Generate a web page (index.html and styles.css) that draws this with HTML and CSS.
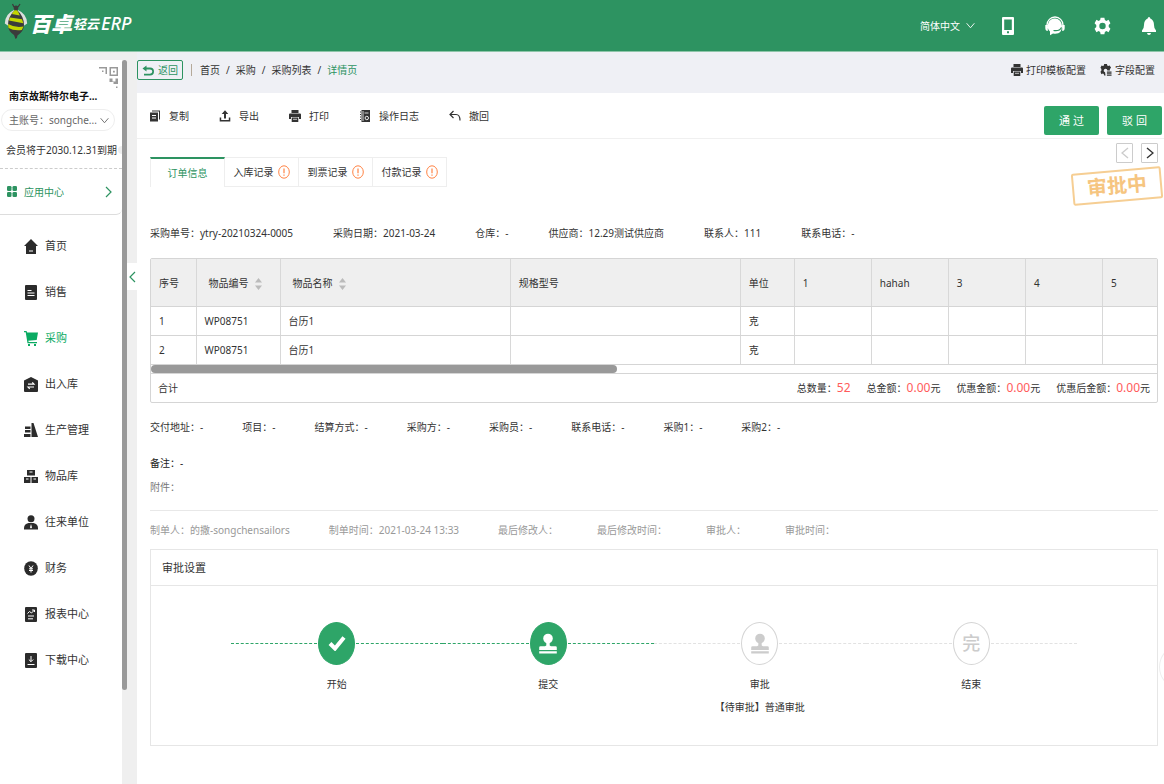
FILE: index.html
```html
<!DOCTYPE html>
<html lang="zh-CN">
<head>
<meta charset="utf-8">
<meta name="viewport" content="width=device-width, initial-scale=1">
<title>百卓轻云ERP</title>
<link rel="stylesheet" href="styles.css">
</head>
<body>
<svg class="defs" aria-hidden="true">
  <symbol id="printer" viewBox="0 0 12 12"><path d="M2.500 0h7v3h-7zM1 3.500h10a1 1 0 0 1 1 1V9h-2V7H2v2H0V4.500a1 1 0 0 1 1-1zM2.700 7.500h6.600V12H2.700z"/><path d="M4 9.300h4" stroke="#fff" stroke-width=".7"/></symbol>
  <symbol id="warn" viewBox="0 0 12 14"><ellipse cx="6" cy="7" rx="5.300" ry="6.200" fill="none" stroke="#ff8344"/><path d="M6 3.500v4.700M6 9.500v1.300" stroke="#ff8344" stroke-width="1.200"/></symbol>
  <symbol id="stamp" viewBox="0 0 18 21"><circle cx="9" cy="5.500" r="4.800"/><path d="M7.300 9h3.400v3.500l1.300.8h4.500q1.300 0 1.300 1.300V17H.2v-2.400q0-1.300 1.300-1.300H6l1.300-.8zM.2 18.300h17.600v2.200H.2z"/></symbol>
  <symbol id="sort" viewBox="0 0 7 12"><path d="M3.500 0 7 4.500H0zM0 7.500h7L3.500 12z"/></symbol>
</svg>

<header class="topbar">
  <a class="logo" href="#">
    <svg class="bee" viewBox="0 0 24 36"><path d="M10 4 8.500 1M14 4l2-3" stroke="#3b3b3b" stroke-width="1.300"/><path d="M10 7Q1 11 .8 20.500L6 24q0-9 5-14zM14 7q9 4 9.200 13.500L18 24q0-9-5-14z" fill="#dcdfdc"/><path d="M12 6q-8 7-8 16 0 6 6 10l1.500 4q2-1 2-3.500Q20 28 20 22q0-9-8-16z" fill="#3b3b3b"/><path d="M12 6q-2.500 2-4.200 5l8 1.500q-1.300-4-3.800-6.500zM6 14.500l12 1.800 1.300 4L5 17.500zM4 21q7 4 15.500 2.500L17.800 27Q10 28 4.500 25z" fill="#c3d600"/><circle cx="12" cy="5" r="2.400" fill="#3b3b3b"/></svg>
    <span class="logo-main">百卓</span><span class="logo-sub">轻云</span><span class="logo-erp">ERP</span>
  </a>
  <nav class="top-tools" aria-label="工具">
    <label class="language"><select aria-label="语言"><option>简体中文</option></select><svg class="caret" viewBox="0 0 10 7"><path d="m.7 1 4.300 5 4.300-5"/></svg></label>
    <button class="plain" aria-label="手机"><svg class="phone" viewBox="0 0 12 18"><path fill="#fff" fill-rule="evenodd" d="M1 0h10q1 0 1 1v16q0 1-1 1H1q-1 0-1-1V1q0-1 1-1zm1.200 2.500v10.500h7.600V2.500zM5 14.300v2h2v-2z"/></svg></button>
    <button class="plain" aria-label="客服"><svg class="large" viewBox="0 0 20 20"><path d="M2 12V9a8 8 0 0 1 16 0v3" fill="none" stroke="#fff" stroke-width="1.300"/><path d="M10 2.500a7 7.500 0 0 0-5 13v3.700l3-1.700q9 1.500 9-7.500a7 7.500 0 0 0-7-7.500zM.3 9h2.500v6Q.3 15 .3 12zM17.200 9h2.500v3q0 3-2.500 3z" fill="#fff"/><path d="M8.500 14.500q6 1 8-3" fill="none" stroke="#2d9361" stroke-width="1.200"/></svg></button>
    <button class="plain" aria-label="设置"><svg class="gear" viewBox="0 0 18 20"><path fill="#fff" fill-rule="evenodd" d="M7 1.200h4l.5 2.500 1.600 1 2.300-1.200 2 3.500-1.800 1.900v2.200l1.800 1.900-2 3.500-2.300-1.200-1.600 1-.5 2.500H7l-.5-2.500-1.600-1-2.300 1.200-2-3.500L2.400 11V8.900L.6 7l2-3.500 2.300 1.200 1.600-1zM9 6.500a3.400 3.500 0 1 0 0 7 3.400 3.500 0 0 0 0-7z"/></svg></button>
    <button class="plain" aria-label="通知"><svg class="bell" viewBox="0 0 14 18"><path fill="#fff" d="M7 0q1.200 0 1.300 1.500Q12 3 12 8q0 4 2 5.500V15H0v-1.500Q2 12 2 8q0-5 3.700-6.500Q5.800 0 7 0zM5 16h4q-.3 2-2 2t-2-2z"/></svg></button>
  </nav>
</header>

<div class="shell">
  <aside class="sidebar">
    <div class="sidebar-body">
      <section class="account">
        <svg class="qr" viewBox="0 0 19 22"><path d="M0 1h8v7H6.500V2.500H0zM10.500 1H19v9h-8.500zM12 2.500v6h5.500v-6zM14 4.700h1.800v1.800H14zM3 4.500h1.500V6H3zM10.500 12.500h3v3h3v-3H19V18h-4.500v-2h-4zM17 20.500h1.500V22H17z" fill="#999" fill-rule="evenodd"/></svg>
        <h1 class="company">南京故斯特尔电子...</h1>
        <label class="account-select"><select aria-label="账号"><option>主账号：songche...</option></select><svg class="caret" viewBox="0 0 10 7"><path d="m.7 1 4.300 5 4.300-5"/></svg></label>
        <p class="expiry">会员将于2030.12.31到期<i class="expiry-dot"></i></p>
        <a class="app-center" href="#"><svg class="grid-icon" viewBox="0 0 10 11"><rect width="4.500" height="5" rx="1.300"/><rect x="5.500" width="4.500" height="5" rx="1.300"/><rect y="6" width="4.500" height="5" rx="1.300"/><rect x="5.500" y="6" width="4.500" height="5" rx="1.300"/></svg><span>应用中心</span><svg class="chevron" viewBox="0 0 7 12"><path d="m1 1 5 5-5 5"/></svg></a>
      </section>
      <nav class="menu" aria-label="主菜单">
        <a href="#"><svg viewBox="0 0 14 15"><path d="m7 0 7 7h-2v8H2V7H0zM5 11.500v1h4v-1z" fill-rule="evenodd"/></svg>首页</a>
        <a href="#"><svg viewBox="0 0 14 15"><path d="M2 0h10q1 0 1 1v13q0 1-1 1H2q-1 0-1-1V1q0-1 1-1z"/><path d="M3.500 5.500h4M3.500 8h7M3.500 10.500h7" stroke="#fff" stroke-width="1.200"/></svg>销售</a>
        <a class="active" href="#"><svg viewBox="0 0 14 15"><path d="M0 0h2.500l.7 1.500H14l-1.300 7.500-8.500.8.500 1.200H13v1.300H3.500L1.700 1.300H0zM4 13h2v2H4zM10 13h2v2h-2z"/></svg>采购</a>
        <a href="#"><svg viewBox="0 0 14 15"><path d="m7 0 7 3.500V14q0 1-1 1H1q-1 0-1-1V3.500z"/><path d="M4 7.200h6L8.300 5.300M10 10H4l1.700 1.900" stroke="#fff" stroke-width="1.200" fill="none"/></svg>出入库</a>
        <a href="#"><svg viewBox="0 0 14 15"><path d="M7.500 0h2L14 14H7.500zM1 3.500h5.500V6H1zM1 7h5.500v2.500H1zM0 11h6.500v3H0z"/></svg>生产管理</a>
        <a href="#"><svg viewBox="0 0 14 15"><path d="M3 1h8v5.500H3zM0 8h6.500v6H0zM7.500 8H14v6H7.500z"/><path d="M5.500 3h3M2 10h2.500M9.500 10H12" stroke="#fff"/></svg>物品库</a>
        <a href="#"><svg viewBox="0 0 14 15"><circle cx="7" cy="3.800" r="3.500"/><path d="M4.500 8h5Q14 9 14 13v1.500H0V13Q0 9 4.500 8z"/><path d="m7 9-1 3.500 1 1 1-1z" fill="#fff"/></svg>往来单位</a>
        <a href="#"><svg viewBox="0 0 14 15"><ellipse cx="7" cy="7.500" rx="6.800" ry="7.300"/><path d="m5 4.500 2 3 2-3M5 7.800h4M5 9.500h4M7 7.500V11.500" stroke="#fff" fill="none"/></svg>财务</a>
        <a href="#"><svg viewBox="0 0 14 15"><path d="M2 0h10q1 0 1 1v13q0 1-1 1H2q-1 0-1-1V1q0-1 1-1z"/><path d="m3.500 6.500 2-2 2 1.500L10.500 3M8 3h2.500v2M4 9h6M4 11.800h5" stroke="#fff" fill="none"/></svg>报表中心</a>
        <a href="#"><svg viewBox="0 0 14 15"><path d="M2 0h10q1 0 1 1v13q0 1-1 1H2q-1 0-1-1V1q0-1 1-1z"/><path d="M7 3v5.500M4.800 6.500 7 8.700l2.200-2.200M3.500 11.500h7" stroke="#fff" fill="none"/></svg>下载中心</a>
      </nav>
    </div>
    <div class="side-scroll"></div>
  </aside>
  <div class="gutter"><button class="collapse" aria-label="收起菜单"><svg class="chevron" viewBox="0 0 7 12"><path d="M6 1 1 6l5 5"/></svg></button></div>

  <main class="main">
    <div class="crumb-bar">
      <button class="back"><svg viewBox="0 0 12 11"><path d="M4.500.5.500 3.500l4 3v-2H8q2.300 0 2.300 2T8 8.700H2v1.800h6q4 0 4-4t-4-4H4.500z" fill="currentColor"/></svg>返回</button>
      <i class="bar"></i>
      <nav class="crumbs" aria-label="面包屑"><a href="#">首页</a><span>/</span><a href="#">采购</a><span>/</span><a href="#">采购列表</a><span>/</span><a class="current" href="#">详情页</a></nav>
      <div class="configs">
        <button class="plain"><svg class="i12"><use href="#printer"/></svg>打印模板配置</button>
        <button class="plain"><svg class="i12" viewBox="0 0 12 13"><path fill-rule="evenodd" d="M4 0h3l.4 1.700 1 .5L10 1.500l1.500 2.500-1.300 1.500V7H7.500a2 2 0 1 0-2.500 2l.5 3.500H4l-.4-1.700-1-.5-1.600.7L0 8.500 1 7V5.500L0 4l1.200-2.500 1.500.7 1-.5zM7 8.200h5v1.200H7zM7 10h5v1H7zM7 11.700h5v1H7z"/></svg>字段配置</button>
      </div>
    </div>

    <div class="toolbar">
      <button class="plain"><svg class="i12" viewBox="0 0 12 12"><path d="M3 .5h8v9h-1v-8H3zM1 2.500h8v9H1z"/><path d="M3 5.500h4M3 8h4" stroke="#fff"/></svg>复制</button>
      <button class="plain"><svg class="i12" viewBox="0 0 12 12"><path d="m6 .3 3.300 3.700H7v4.500H5V4H2.700zM.7 7.500h1.500V10h7.600V7.500h1.500v4H.7z"/></svg>导出</button>
      <button class="plain"><svg class="i12"><use href="#printer"/></svg>打印</button>
      <button class="plain"><svg class="i12" viewBox="0 0 12 12"><path d="M2.500 0H11v12H2.500zM1 1.500h1v1H1zM1 4h1v1H1zM1 6.500h1v1H1zM1 9h1v1H1z"/><path d="M4 1v10M5.500 3h4" stroke="#fff" stroke-width=".8"/><circle cx="7.800" cy="8" r="1.700" fill="none" stroke="#fff" stroke-width=".9"/></svg>操作日志</button>
      <button class="plain"><svg class="i12" viewBox="0 0 12 12"><path d="M4.500 1 1 4.500 4.500 8M1 4.500h6q4 0 4 6" fill="none" stroke="#333" stroke-width="1.200"/></svg>撤回</button>
      <div class="decisions"><button class="primary">通 过</button><button class="primary">驳 回</button></div>
    </div>

    <div class="content">
      <div class="tab-row">
        <div class="tabs" role="tablist">
          <button class="tab selected" role="tab" aria-selected="true">订单信息</button>
          <button class="tab" role="tab">入库记录<svg class="warn"><use href="#warn"/></svg></button>
          <button class="tab" role="tab">到票记录<svg class="warn"><use href="#warn"/></svg></button>
          <button class="tab" role="tab">付款记录<svg class="warn"><use href="#warn"/></svg></button>
        </div>
        <div class="status">
          <div class="pager"><button class="off" aria-label="上一条" disabled><svg viewBox="0 0 8 12"><path d="M7 1 1 6l6 5"/></svg></button><button aria-label="下一条"><svg viewBox="0 0 8 12"><path d="m1 1 6 5-6 5"/></svg></button></div>
          <div class="seal">审批中</div>
        </div>
      </div>

      <div class="fields summary"><span>采购单号：ytry-20210324-0005</span><span>采购日期：2021-03-24</span><span>仓库：-</span><span>供应商：12.29测试供应商</span><span>联系人：111</span><span>联系电话：-</span></div>

      <div class="items">
        <div class="items-scroll">
          <table>
            <colgroup><col class="c-no"><col class="c-code"><col class="c-long"><col class="c-long"><col class="c-unit"><col class="c-x"><col class="c-x"><col class="c-x"><col class="c-x"><col class="c-x"></colgroup>
            <thead><tr><th>序号</th><th class="sortable">物品编号<svg class="sort"><use href="#sort"/></svg></th><th class="sortable">物品名称<svg class="sort"><use href="#sort"/></svg></th><th>规格型号</th><th>单位</th><th>1</th><th>hahah</th><th>3</th><th>4</th><th>5</th></tr></thead>
            <tbody>
              <tr><td>1</td><td>WP08751</td><td>台历1</td><td></td><td>克</td><td></td><td></td><td></td><td></td><td></td></tr>
              <tr><td>2</td><td>WP08751</td><td>台历1</td><td></td><td>克</td><td></td><td></td><td></td><td></td><td></td></tr>
            </tbody>
          </table>
        </div>
        <div class="track"><div class="thumb"></div></div>
        <div class="totals"><span class="sum">合计</span><span>总数量：<b>52</b></span><span>总金额：<b>0.00</b>元</span><span>优惠金额：<b>0.00</b>元</span><span>优惠后金额：<b>0.00</b>元</span></div>
      </div>

      <div class="fields more"><span>交付地址：-</span><span>项目：-</span><span>结算方式：-</span><span>采购方：-</span><span>采购员：-</span><span>联系电话：-</span><span>采购1：-</span><span>采购2：-</span></div>
      <p class="remark">备注：-</p>
      <p class="attachment">附件：</p>
      <div class="fields audit"><span>制单人：的撒-songchensailors</span><span>制单时间：2021-03-24 13:33</span><span>最后修改人：</span><span>最后修改时间：</span><span>审批人：</span><span>审批时间：</span></div>

      <section class="approval">
        <h2>审批设置</h2>
        <ol class="steps">
          <li class="done"><div class="rail"><span class="node"><svg class="check" viewBox="0 0 18 16"><path d="m2 8.500 5 5L16 2.500" fill="none" stroke="#fff" stroke-width="4"/></svg></span></div><p>开始</p></li>
          <li class="done"><div class="rail"><span class="node"><svg class="stamp"><use href="#stamp"/></svg></span></div><p>提交</p></li>
          <li><div class="rail"><span class="node"><svg class="stamp"><use href="#stamp"/></svg></span></div><p>审批</p><p>【待审批】普通审批</p></li>
          <li><div class="rail"><span class="node">完</span></div><p>结束</p></li>
        </ol>
      </section>
    </div>
    <button class="helper" aria-label="帮助"></button>
  </main>
</div>
</body>
</html>
```
FILE: styles.css
```css
* { box-sizing: border-box; }
body {
  margin: 0;
  min-height: 100vh;
  display: flex;
  flex-direction: column;
  overflow: hidden;
  background: #efefef;
  color: #333;
  font: 10px/16px "Noto Sans", "Noto Sans CJK SC", sans-serif;
}
h1, h2, p, ol { margin: 0; padding: 0; font-weight: 400; }
a { color: inherit; text-decoration: none; }
button, select { font: inherit; color: inherit; padding: 0; margin: 0; border: 0; background: none; }
select { appearance: none; outline: 0; }
button { cursor: pointer; white-space: nowrap; }
svg { flex: none; display: block; }
.defs { position: absolute; width: 0; height: 0; }
.plain { display: flex; align-items: center; }
.i12 { width: 12px; height: 12px; fill: #333; }
.caret { width: 9px; height: 7px; fill: none; stroke: currentColor; }
.chevron { width: 7px; height: 12px; fill: none; stroke: #2d9361; stroke-width: 1.2; }

.topbar {
  display: flex;
  justify-content: space-between;
  height: 52px;
  background: #2d9361;
  border-bottom: 1px solid #8ec5a9;
  color: #fff;
}
.logo { display: flex; align-items: center; height: 46px; padding-left: 4px; }
.bee { width: 24px; height: 36px; margin: 0 2px 4px 0; }
.logo-main { font: italic 900 21px/28px "Noto Sans CJK SC", sans-serif; }
.logo-sub { font: italic 700 13px/28px "Noto Sans CJK SC", sans-serif; padding: 2px 2px 0 1px; }
.logo-erp { font: italic 500 18px/28px "Noto Sans", sans-serif; }
.top-tools { display: flex; align-items: center; height: 51px; padding-right: 8px; }
.language { display: flex; align-items: center; gap: 6px; margin-right: 27px; }
.phone { width: 12px; height: 18px; margin-right: 31px; }
.large { width: 20px; height: 20px; margin-right: 29px; }
.gear { width: 17px; height: 20px; margin-right: 31px; }
.bell { width: 14px; height: 18px; }

.shell { display: flex; flex: 1; }
.sidebar { display: flex; width: 127px; padding-top: 8px; flex: none; }
.sidebar-body { flex: 1; background: #fff; }
.side-scroll { width: 5px; height: 630px; background: #999; border-radius: 3px; }
.account { padding-top: 6px; border-bottom: 1px solid #ddd; border-radius: 0 0 6px 0; }
.qr { width: 19px; height: 22px; margin: 0 4px 0 auto; }
.company { padding-left: 9px; font-size: 10px; line-height: 16px; font-weight: 700; color: #111; white-space: nowrap; }
.account-select {
  display: flex;
  align-items: center;
  justify-content: space-between;
  height: 22px;
  margin: 5px 7px 0 1px;
  padding: 0 5px 0 7px;
  border: 1px solid #eee;
  border-radius: 11px;
  color: #666;
}
.expiry { display: flex; justify-content: space-between; align-items: center; padding: 11px 0 10px 6px; white-space: nowrap; border-bottom: 1px dashed #ccc; }
.expiry-dot { width: 4px; height: 8px; border-radius: 4px 0 0 4px; background: #eee; }
.app-center { display: flex; align-items: center; height: 45px; padding: 0 10px 0 7px; color: #2d9361; }
.app-center span { flex: 1; padding-left: 7px; }
.grid-icon { width: 10px; height: 11px; fill: #2d9361; }
.menu { padding-top: 8px; }
.menu a { display: flex; align-items: center; gap: 7px; height: 46px; padding-left: 24px; font-size: 11px; }
.menu svg { width: 14px; height: 15px; fill: #2b2b2b; }
.menu .active { color: #0bab63; }
.menu .active svg { fill: #0bab63; }

.gutter { width: 10px; flex: none; padding-top: 211px; }
.collapse { display: flex; align-items: center; justify-content: center; width: 10px; height: 27px; background: #fff; }

.main { position: relative; flex: 1; min-width: 0; display: flex; flex-direction: column; overflow: hidden; background: #fff; }
.crumb-bar { display: flex; align-items: center; height: 41px; padding: 0 9px 5px 0; background: #eff0f5; }
.back { display: flex; align-items: center; gap: 4px; height: 20px; padding: 0 4px; border: 1px solid #2d9361; border-radius: 2px; color: #2d9361; }
.back svg { width: 12px; height: 11px; }
.bar { width: 1px; height: 12px; margin: 0 8px; background: #b5a99a; }
.crumbs { display: flex; gap: 6px; }
.crumbs .current { color: #2d9361; }
.configs { display: flex; gap: 14px; margin-left: auto; }
.configs button { gap: 3px; }

.toolbar { display: flex; align-items: center; gap: 30px; height: 46px; padding: 0 2px 0 12px; border-bottom: 1px solid #f0f0f0; }
.toolbar .plain { gap: 8px; }
.decisions { display: flex; gap: 8px; margin: 10px 0 0 auto; }
.primary { width: 55px; height: 29px; border-radius: 2px; background: #2ea568; color: #fff; font-size: 11px; }

.content { padding: 0 6px 39px 13px; }
.tab-row { display: flex; justify-content: space-between; align-items: flex-start; }
.tabs { display: flex; margin-top: 18px; }
.tab { display: flex; align-items: center; justify-content: center; gap: 4px; width: 74px; height: 30px; border: 1px solid #eee; border-left: 0; }
.tab.selected { width: 75px; border-top: 2px solid #2d9361; border-left: 1px solid #eee; border-bottom: 0; color: #2d9361; }
.warn { width: 12px; height: 14px; }
.status { display: flex; flex-direction: column; align-items: flex-end; gap: 7px; padding-top: 4px; }
.pager { display: flex; gap: 8px; }
.pager button { display: flex; align-items: center; justify-content: center; width: 17px; height: 20px; border: 1px solid #ccc; border-radius: 1px; }
.pager svg { width: 8px; height: 12px; fill: none; stroke: #333; stroke-width: 1.4; }
.pager .off svg { stroke: #ccc; }
.seal { width: 90px; height: 32px; margin-right: -4px; border: 2px solid #f6ce93; border-radius: 2px; color: #f6c580; font-size: 20px; line-height: 28px; font-weight: 700; text-align: center; transform: rotate(-5deg); }

.fields { display: flex; gap: 39px; white-space: nowrap; }
.summary { gap: 40px; padding: 23px 0 17px; }
.items { border: 1px solid #d5d5d5; border-radius: 2px; }
.items-scroll { overflow: hidden; }
table { width: 100%; min-width: 1029px; table-layout: fixed; border-collapse: collapse; }
.c-no { width: 45px; }
.c-code { width: 84px; }
.c-long { width: 230px; }
.c-unit { width: 54px; }
.c-x { width: 77px; }
th, td { padding: 1px 8px 0; border-right: 1px solid #d8d8d8; border-bottom: 1px solid #d5d5d5; text-align: left; font-weight: 400; white-space: nowrap; }
th { height: 47px; background: #efefef; }
td { height: 29px; }
.sortable { padding-left: 12px; }
.sort { display: inline-block; width: 7px; height: 12px; margin-left: 6px; vertical-align: middle; fill: #bbb; }
.track { height: 8px; }
.thumb { width: 46.3%; height: 8px; border-radius: 4px; background: #999; }
.totals { display: flex; align-items: center; gap: 16px; height: 29px; padding: 0 7px; border-top: 1px solid #d5d5d5; }
.sum { margin-right: auto; }
.totals b { font-size: 12px; font-weight: 400; color: #ff5b5b; }

.more { padding: 16px 0 20px; }
.remark { color: #222; }
.attachment { padding: 8px 0 15px; color: #777; }
.audit { padding: 11px 0; border-top: 1px solid #e8e8e8; color: #999; }
.approval { border: 1px solid #e6e6e6; }
.approval h2 { padding: 10px 11px 9px; border-bottom: 1px solid #e6e6e6; font-size: 11px; line-height: 16px; }
.steps { display: grid; grid-template-columns: repeat(4, 1fr); list-style: none; padding: 36px 80px 23px; text-align: center; }
.rail { display: flex; align-items: center; gap: 1px; margin-bottom: 11px; }
.rail::before, .rail::after { content: ""; flex: 1; border-top: 1px dashed #e2e2e2; }
.done .rail::before, .done .rail::after { border-color: #2ea568; }
.node { display: flex; align-items: center; justify-content: center; width: 37px; height: 43px; border: 1px solid #d5d5d5; border-radius: 50%; color: #ccc; font-size: 18px; font-weight: 500; }
.done .node { background: #2ea568; border-color: #2ea568; }
.stamp { width: 18px; height: 21px; fill: #ccc; }
.done .stamp { fill: #fff; }
.check { width: 18px; height: 16px; }
.steps p { margin-bottom: 7px; white-space: nowrap; }
.helper { position: absolute; right: -33px; top: 594px; width: 38px; height: 42px; border: 1px solid #eee; border-radius: 50%; background: #fff; }
```
